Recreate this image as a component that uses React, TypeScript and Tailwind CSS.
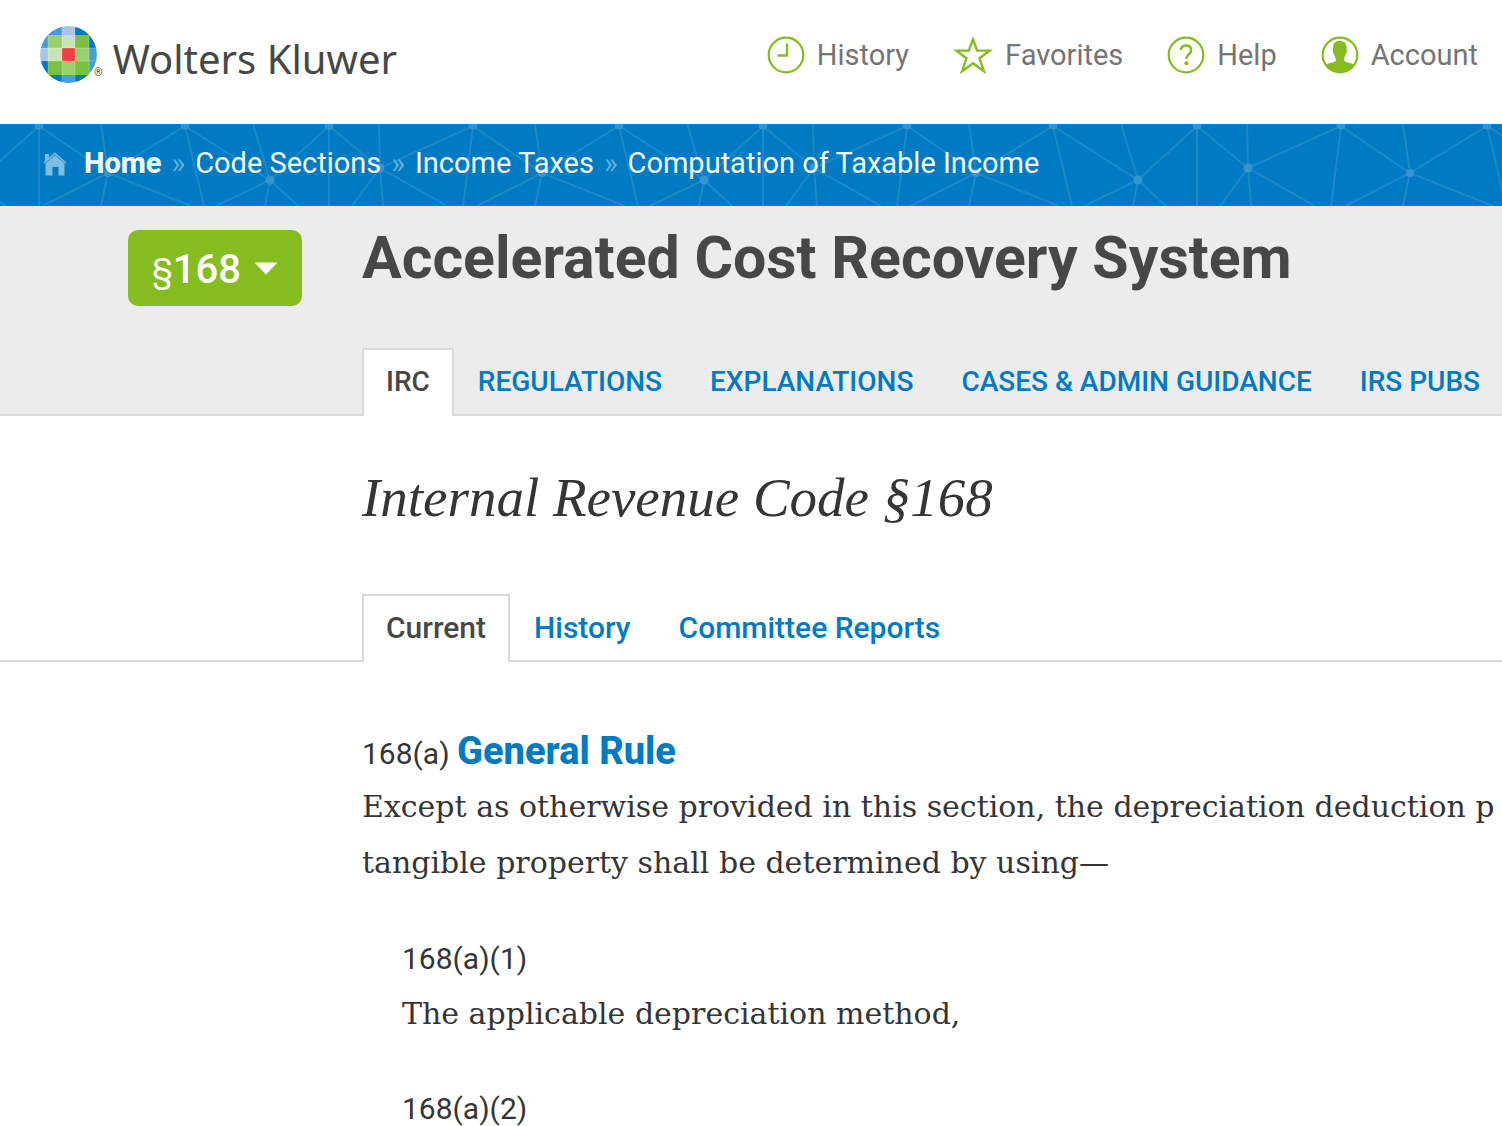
import type { ReactNode } from 'react';

const TILES = [0, 434, 868, 1302, 1736, 2170, 2604];

const CELL_LINES =
  'M39 2L108 49M185 2L108 49M185 2L270 56M185 2L204 82M270 56L253 0M270 56L329 2M270 56L216 82M270 56L265 82M270 56L298 82M329 2V82M329 2L380 44M380 44L379 0M380 44L473 2M380 44L352 82M380 44L383 82M380 44L447 82M108 49L101 0M108 49L43 82M108 49L101 82M108 49L191 82';

function NetworkPattern() {
  return (
    <svg className="pointer-events-none absolute left-0 top-0" width="3000" height="82" aria-hidden="true">
      <g stroke="#ffffff" strokeOpacity="0.11" strokeWidth="2" fill="none">
        <path d="M39 2V82M39 2L0 37M0 78L7 82" />
        {TILES.map((x) => (
          <g key={x} transform={`translate(${x} 0)`}>
            <path d={CELL_LINES} />
            <path d="M473 2L463 82" />
          </g>
        ))}
      </g>
      <g fill="#3595d3">
        {TILES.map((x) => (
          <g key={x} transform={`translate(${x} 0)`}>
            <circle cx="39" cy="1" r="4.5" />
            <circle cx="185" cy="1" r="4.5" />
            <circle cx="329" cy="1" r="4.5" />
            <circle cx="108" cy="49" r="4" />
            <circle cx="270" cy="56" r="4.5" />
            <circle cx="380" cy="44" r="4.5" />
          </g>
        ))}
      </g>
    </svg>
  );
}

function LogoMark() {
  const s = '#409fdb';
  const d = '#007ac3';
  const l = '#a6c7e9';
  const g = '#7ac143';
  const m = '#9bd070';
  const p = '#cae5b5';
  const rows = [
    [s, s, l, d, d],
    [s, m, p, g, d],
    [l, p, '#ef4044', m, s],
    [d, g, m, g, s],
    [d, d, s, d, s],
  ];
  const xs = [0, 8, 22, 35, 49, 57];
  const ys = [0, 9, 22, 35, 49, 57];
  return (
    <svg width="57" height="57" viewBox="0 0 57 57" aria-hidden="true" className="shrink-0">
      <defs>
        <clipPath id="globe">
          <circle cx="28.5" cy="28.5" r="28.4" />
        </clipPath>
      </defs>
      <g clipPath="url(#globe)">
        {rows.map((row, r) =>
          row.map((fill, c) => (
            <rect
              key={`${r}-${c}`}
              x={xs[c]}
              y={ys[r]}
              width={xs[c + 1] - xs[c]}
              height={ys[r + 1] - ys[r]}
              fill={fill}
            />
          )),
        )}
        <path d="M8 9V49M22 0V57M35 0V57M49 9V49M0 22H57M0 35H57" stroke="#ffffff" strokeOpacity="0.22" strokeWidth="1" />
      </g>
    </svg>
  );
}

function ClockIcon() {
  return (
    <svg width="38" height="38" viewBox="0 0 38 38" fill="none" stroke="#85bc20" strokeWidth="2.2" aria-hidden="true">
      <circle cx="19" cy="19" r="17.3" />
      <path d="M20 7.500V19.500H10.500" strokeWidth="2.400" />
    </svg>
  );
}

function StarIcon() {
  return (
    <svg width="40" height="38" viewBox="0 0 40 38" fill="none" stroke="#85bc20" strokeWidth="2.4" aria-hidden="true">
      <path d="M20 3.500L24.200 14.600H36.500L26.600 22.300L30.900 35.300L20 27.300L9.100 35.300L13.400 22.300L3.500 14.600H15.800Z" />
    </svg>
  );
}

function HelpIcon() {
  return (
    <svg width="38" height="38" viewBox="0 0 38 38" fill="none" stroke="#85bc20" strokeWidth="2.2" aria-hidden="true">
      <circle cx="19" cy="19" r="17.3" />
      <path d="M13.800 14.200C14 11 16 9.500 19 9.500C22.200 9.500 24.200 11.300 24.200 14C24.200 18.200 19.400 18.200 19.400 23" strokeWidth="2.500" />
      <circle cx="19.400" cy="27.200" r="2" fill="#85bc20" stroke="none" />
    </svg>
  );
}

function AccountIcon() {
  return (
    <svg width="38" height="38" viewBox="0 0 38 38" aria-hidden="true">
      <circle cx="19" cy="19" r="17.3" fill="none" stroke="#85bc20" strokeWidth="2.2" />
      <path
        d="M18.500 5C22.500 5 25.500 6.500 25.500 11C25.500 12.500 26.200 13.500 25.700 15.500C25.300 17.500 24.500 18.500 24 20C23.500 21.800 23 22.500 23.200 24.500C24 26.800 29 26.500 33 28.500C29.500 34 24.500 36.500 19 36.500C13.500 36.500 8.500 34 5 28.500C9 26.500 14 26.800 14.800 24.500C15 22.500 14.200 21.800 13.800 20C13.200 18.500 12.200 17.500 12 15.500C11.700 13.500 12.200 12.500 12.200 10.500C12.200 7 14.500 5 18.500 5Z"
        fill="#85bc20"
      />
    </svg>
  );
}

function HomeIcon() {
  return (
    <svg width="24" height="24" viewBox="0 0 24 24" fill="#7fbce1" aria-hidden="true" className="shrink-0">
      <path d="M2 2H6V5.500L12 0.500L23.500 10.500L22.600 11.500L12 2.400L1.400 11.500L0.500 10.500L2 9Z" />
      <path d="M12 3.200L21.500 11.300V23.500H15.500V15H9.500V23.500H2.500V11.300Z" />
    </svg>
  );
}

const navItems: { label: string; icon: ReactNode }[] = [
  { label: 'History', icon: <ClockIcon /> },
  { label: 'Favorites', icon: <StarIcon /> },
  { label: 'Help', icon: <HelpIcon /> },
  { label: 'Account', icon: <AccountIcon /> },
];

const crumbs = ['Code Sections', 'Income Taxes', 'Computation of Taxable Income'];

function Tabs({ items, small }: { items: string[]; small?: boolean }) {
  return (
    <div role="tablist" className="flex h-[68px] whitespace-nowrap">
      <div className="w-[362px] shrink-0 border-b-2 border-[#d9d9d9]" />
      {items.map((item, i) => (
        <button
          key={item}
          type="button"
          role="tab"
          aria-selected={i === 0}
          className={
            (small ? 'text-[28px] ' : 'text-[30px] ') +
            (i === 0
              ? 'shrink-0 border-x-2 border-t-2 border-[#d9d9d9] bg-white px-[22px] pb-[3px] font-medium text-[#474747]'
              : 'shrink-0 border-b-2 border-[#d9d9d9] px-6 pt-px font-medium text-[#007ac3]')
          }
        >
          {item}
        </button>
      ))}
      <div className="grow border-b-2 border-[#d9d9d9]" />
    </div>
  );
}

export default function App() {
  return (
    <div className="min-h-screen overflow-x-hidden bg-white font-[Roboto,sans-serif] text-[#353535]">
      <header className="flex h-[124px] items-start justify-between pl-10 pr-6">
        <a href="#" className="flex items-start pt-[26px]">
          <LogoMark />
          <span className="-ml-[3px] mt-[41px] text-[11px] leading-none text-[#474747]">®</span>
          <span className="ml-[10px] mt-[9px] whitespace-nowrap font-['Noto_Sans',sans-serif] text-[40px] leading-[48px] text-[#474747]">
            Wolters Kluwer
          </span>
        </a>
        <nav className="flex gap-11 pt-[34px]">
          {navItems.map((n) => (
            <a key={n.label} href="#" className="flex items-center gap-3 text-[29px] leading-[42px] text-[#757575]">
              {n.icon}
              {n.label}
            </a>
          ))}
        </nav>
      </header>

      <nav aria-label="Breadcrumb" className="relative h-[82px] overflow-hidden bg-[#007ac3]">
        <NetworkPattern />
        <div className="relative flex h-20 items-center whitespace-nowrap pl-[43px] text-[29px] text-[#f4f8fb]">
          <HomeIcon />
          <a href="#" className="ml-[17px] font-extrabold">
            Home
          </a>
          {crumbs.map((c) => (
            <span key={c} className="flex">
              <span className="mx-[10px] text-[#66afdb]">»</span>
              <a href="#">{c}</a>
            </span>
          ))}
        </div>
      </nav>

      <section className="bg-[#ececec]">
        <div className="flex h-[142px] items-start pt-6">
          <div className="flex w-[362px] shrink-0 justify-end pr-[60px]">
            <button
              type="button"
              className="flex h-[76px] w-[174px] items-center justify-between rounded-[10px] bg-[#85bc20] px-6 text-white"
            >
              <span className="flex items-center pt-1">
                <span className="text-[34px]">§</span>
                <span className="text-[40px] font-medium">168</span>
              </span>
              <svg width="24" height="13" viewBox="0 0 24 13" fill="currentColor" aria-hidden="true">
                <path d="M0.500 0.500H23.500L12 12.500Z" />
              </svg>
            </button>
          </div>
          <h1 className="-mt-2 whitespace-nowrap text-[59px] font-bold leading-[72px] text-[#474747]">
            Accelerated Cost Recovery System
          </h1>
        </div>
        <Tabs small items={['IRC', 'REGULATIONS', 'EXPLANATIONS', 'CASES & ADMIN GUIDANCE', 'IRS PUBS']} />
      </section>

      <h2 className="pb-[61px] pl-[362px] pt-[47px] font-['Liberation_Serif',serif] text-[55px] italic leading-[70px]">
        Internal Revenue Code §168
      </h2>
      <Tabs items={['Current', 'History', 'Committee Reports']} />

      <main className="pl-[362px] pt-16">
        <h3 className="text-[30px] leading-[50px]">
          168(a){' '}
          <a href="#" className="text-[38px] font-extrabold text-[#007ac3]">
            General Rule
          </a>
        </h3>
        <p className="whitespace-nowrap font-['DejaVu_Serif',serif] text-[30px] leading-[56px]">
          Except as otherwise provided in this section, the depreciation deduction p
          <br />
          tangible property shall be determined by using—
        </p>
        <div className="mt-10 pl-10">
          <h4 className="text-[30px] leading-[56px]">168(a)(1)</h4>
          <p className="font-['DejaVu_Serif',serif] text-[30px] leading-[54px]">The applicable depreciation method,</p>
        </div>
        <div className="mt-10 pl-10">
          <h4 className="text-[30px] leading-[56px]">168(a)(2)</h4>
        </div>
      </main>
    </div>
  );
}
